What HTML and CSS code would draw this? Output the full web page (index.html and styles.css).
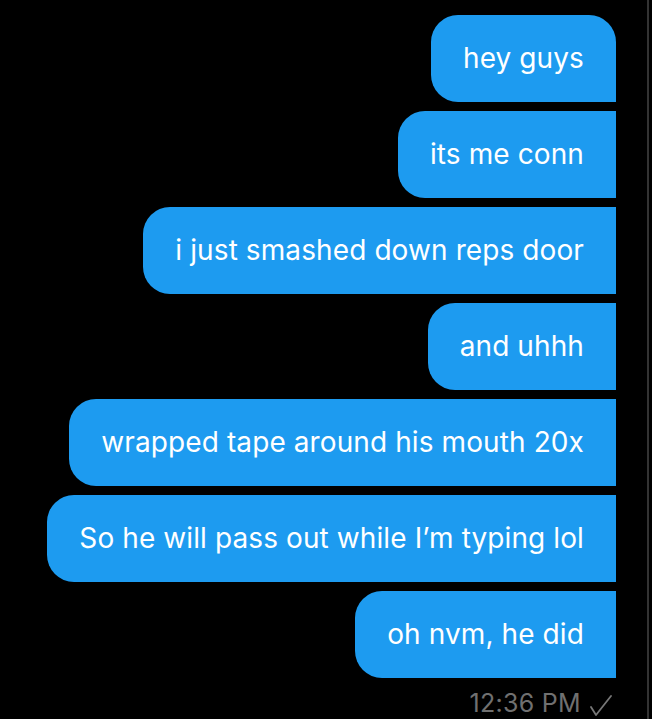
FILE: index.html
```html
<!DOCTYPE html>
<html lang="en">
<head>
    <meta charset="UTF-8">
    <meta name="viewport" content="width=device-width, initial-scale=1.0">
    <title>Messages</title>
    <link rel="stylesheet" href="styles.css">
</head>
<body>
    <div class="screen">
        <div class="thread">
            <div class="bubble first">hey guys</div>
            <div class="bubble">its me conn</div>
            <div class="bubble">i just smashed down reps door</div>
            <div class="bubble">and uhhh</div>
            <div class="bubble">wrapped tape around his mouth 20x</div>
            <div class="bubble">So he will pass out while I’m typing lol</div>
            <div class="bubble last">oh nvm, he did</div>

            <div class="meta">
                <span class="time">12:36 PM</span>
                <svg class="check" width="22" height="21" viewBox="0 0 22 21">
                    <path d="M1 12 L6 20 L21 1" fill="none" stroke="#777" stroke-width="1.8" stroke-linecap="round" stroke-linejoin="round"/>
                </svg>
            </div>
        </div>
    </div>
</body>
</html>
```

FILE: styles.css
```css
html, body {
    margin: 0;
    padding: 0;
    background-color: #000;
}

body {
    font-family: Inter, "Liberation Sans", sans-serif;
}

.screen {
    width: 647px;
    height: 719px;
    border-right: 2px solid #333;
    overflow: hidden;
}

.thread {
    display: flex;
    flex-direction: column;
    align-items: flex-end;
    gap: 9px;
    padding: 15px 31px 0 0;
}

.bubble {
    background-color: #1d9bf0;
    color: #fff;
    font-size: 28px;
    letter-spacing: 0.1px;
    line-height: 33px;
    height: 33px;
    padding: 27px 32px;
    border-radius: 27px 0 0 27px;
    white-space: nowrap;
}

.bubble.first {
    border-top-right-radius: 27px;
}

.meta {
    display: flex;
    align-items: center;
    gap: 9px;
    margin-top: 2px;
    margin-right: 4px;
}

.time {
    color: #707070;
    font-size: 25px;
    letter-spacing: 0.3px;
    line-height: 28px;
}

.check {
    display: block;
    margin-top: 4px;
}
```
